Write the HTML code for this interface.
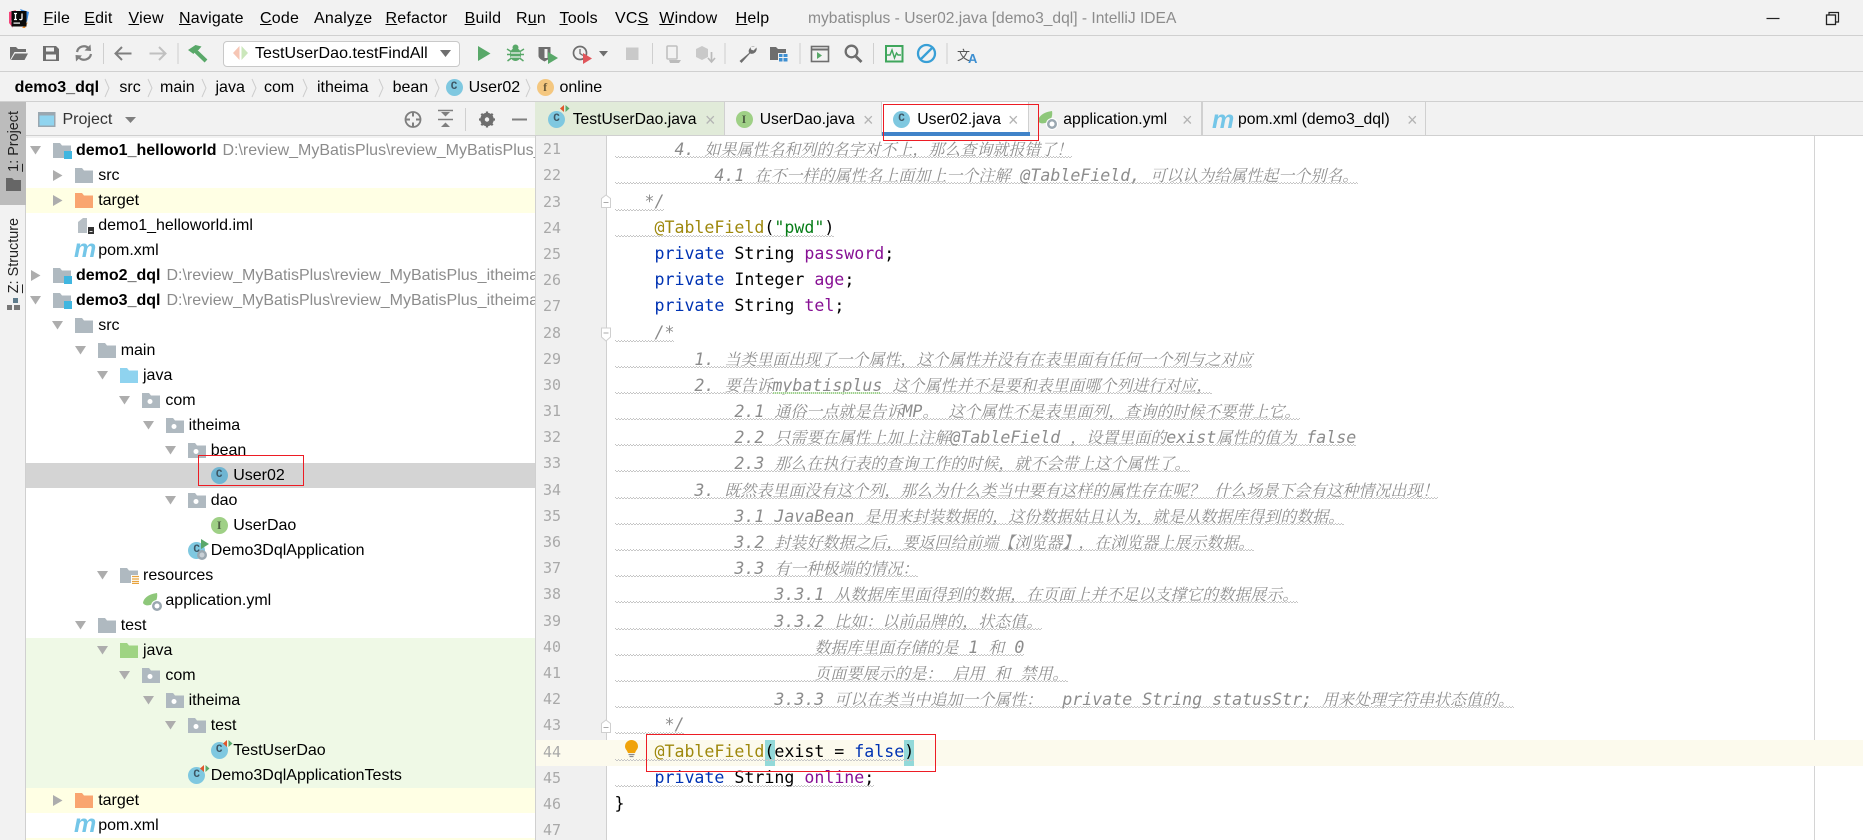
<!DOCTYPE html>
<html><head><meta charset="utf-8"><title>mybatisplus - User02.java</title>
<style>
html,body{margin:0;padding:0;width:1863px;height:840px;overflow:hidden;background:#f2f2f2}
body{position:relative;font:16px "Liberation Sans","Noto Sans CJK SC",sans-serif;color:#000}
.a{position:absolute;white-space:pre}
.hl{position:absolute;left:0;width:1863px;height:1px;background:#d0d0d0}
.m{position:absolute;top:9px;line-height:20px;letter-spacing:.2px}
.b{position:absolute;top:77px;line-height:22px}
.tab{position:absolute;top:102px;height:33px;border-right:1px solid #d0d0d0;box-sizing:border-box}
.tt{position:absolute;top:109px;line-height:22px;font-size:15.7px}
.x{position:absolute;top:110px;color:#b4b4b4;font-size:18px;line-height:20px}
.c{position:absolute;width:17px;height:17px;border-radius:50%;background:#7fc8e0;color:#3d5664;font:bold 11px/17px "Liberation Mono",monospace;text-align:center}
.c.i{background:#9fd086;color:#4d5f42;font-family:"Liberation Serif",serif;font-size:12px}
.c.f{background:#f4c77f;color:#6d5b38;font-family:"Liberation Serif",serif;font-size:12px}
#tree{position:absolute;left:0;top:137.5px;width:535px;height:703px;overflow:hidden;background:#fff}
.r{position:relative;height:25px;line-height:25px;white-space:pre}
.r.y{background:#ffffe4}.r.g{background:#eff9e6}.r.s{background:#d4d4d4}
.d0{--x:76px}.d1{--x:98.2px}.d2{--x:120.7px}.d3{--x:143px}.d4{--x:165.4px}.d5{--x:188.6px}.d6{--x:210.7px}.d7{--x:233.2px}
.t{position:absolute;left:var(--x);top:0}
.t b{margin-right:6px}.t em{font-style:normal;color:#8c8c8c}
.ar{position:absolute;left:calc(var(--x) - 46px);top:7px;width:11px;height:11px}
.ic{position:absolute;left:calc(var(--x) - 23px);top:4px;width:19px;height:17px}
.r .c{left:calc(var(--x) - 22.5px);top:4px}
.ov{position:absolute;left:calc(var(--x) - 22.5px);top:1px;width:24px;height:24px}
#gut{position:absolute;left:535px;top:136px;width:70px;height:704px;background:#f0f0f0;border-left:1px solid #d0d0d0;border-right:1px solid #d0d0d0;box-sizing:content-box}
#nums{position:absolute;left:535px;top:136.2px;width:26px;height:704px;overflow:hidden;text-align:right;color:#a9a9a9;font:15px/26.2px "DejaVu Sans Mono",monospace}
#nums div{height:26.2px}
#code{position:absolute;left:614.5px;top:136.2px;width:1240px;height:703px;overflow:hidden;font:italic 16.6px/26.2px "DejaVu Sans Mono","Noto Serif CJK SC",monospace;color:#8c8c8c;text-spacing-trim:space-all}
#code>div{height:26.2px}
.w,.p{white-space:pre}
.w{display:block;width:fit-content;height:22px;background-image:repeating-linear-gradient(90deg,#c2c2c2 0 1px,transparent 1px 3px),repeating-linear-gradient(90deg,transparent 0 1px,#c8c8c8 1px 3px);background-size:100% 1px;background-position:0 calc(100% - 1px),0 100%;background-repeat:no-repeat}
.p{display:block;width:fit-content;height:22px}
#code i{font:italic 16px/26.2px "Noto Serif CJK SC",serif;color:#8f8f8f}
#code .n{font-style:normal;color:#000}
.kw{color:#0033b3}.fd{color:#871094}.an{color:#9e880d}.st{color:#067d17}
.red{position:absolute;border:1px solid #ed1c24;box-sizing:border-box}
.vt{position:absolute;writing-mode:vertical-rl;transform:rotate(180deg);font-size:14.4px;line-height:16px;left:6px;white-space:pre;color:#222}
</style></head><body>

<svg width="0" height="0" style="position:absolute">
<symbol id="dn" viewBox="0 0 11 11"><polygon points="0,1 11,1 5.5,9.5" fill="#adadad"/></symbol>
<symbol id="rt" viewBox="0 0 11 11"><polygon points="1,0 10.5,5.5 1,11" fill="#adadad"/></symbol>
<symbol id="fo" viewBox="0 0 19 17"><path d="M0 1h7l2 2.500h9V16H0z" fill="#afb9c0"/></symbol>
<symbol id="pk" viewBox="0 0 19 17"><path d="M0 1h7l2 2.500h9V16H0z" fill="#afb9c0"/><circle cx="8" cy="9.500" r="2.500" fill="#fff"/></symbol>
<symbol id="mo" viewBox="0 0 19 17"><path d="M0 1h7l2 2.500h9V16H0z" fill="#afb9c0"/><rect x="11" y="9" width="8" height="8" fill="#40b6e0" /></symbol>
<symbol id="bl" viewBox="0 0 19 17"><path d="M0 1h7l2 2.500h9V16H0z" fill="#8fd3ef"/></symbol>
<symbol id="gr" viewBox="0 0 19 17"><path d="M0 1h7l2 2.500h9V16H0z" fill="#9fd483"/></symbol>
<symbol id="or" viewBox="0 0 19 17"><path d="M0 1h7l2 2.500h9V16H0z" fill="#f9a570"/></symbol>
<symbol id="re" viewBox="0 0 19 17"><path d="M0 1h7l2 2.500h9V16H0z" fill="#afb9c0"/><rect x="11" y="8" width="8" height="9" fill="#fff"/><path d="M12 9.500h7M12 12h7M12 14.500h7M12 16.500h7" stroke="#e8a33d" stroke-width="1.300"/></symbol>
<symbol id="im" viewBox="0 0 19 17"><path d="M3 5l5-4h4v15H3z" fill="#b7bfc5"/><rect x="12" y="8" width="7" height="9" fill="#fff"/><rect x="13" y="10" width="6" height="7" fill="#333"/><rect x="14.500" y="14" width="3" height="1" fill="#ddd"/></symbol>
<symbol id="sp" viewBox="0 0 24 24"><path d="M0 14C1 8 7 5 14 4c1 5-1 11-7 12-3 1-6 0-7-2z" fill="#8ec77a"/><circle cx="14" cy="17" r="6" fill="#fff"/><circle cx="14" cy="17" r="5" fill="#9aa7b0"/><circle cx="14" cy="17" r="2.500" fill="#fff"/></symbol>
<symbol id="tst" viewBox="0 0 24 24"><polygon points="16,1 16,8 12,4.500" fill="#e0562b"/><polygon points="17.500,1 17.500,8 21.500,4.500" fill="#59a869"/></symbol>
<symbol id="app" viewBox="0 0 24 24"><polygon points="13,0 21,5 13,10" fill="#59a869"/><circle cx="14" cy="16" r="5" fill="#9aa7b0"/><circle cx="14" cy="16" r="2.500" fill="#c8d0d6"/></symbol>
</svg>

<!-- top bars -->
<div class="hl" style="top:35px"></div>
<div class="hl" style="top:71px"></div>
<div class="hl" style="top:101px"></div>

<svg class="a" style="left:8px;top:9px" width="22" height="20" viewBox="0 0 22 20"><path d="M1 3L8 1 3 12 5 19 1 14z" fill="#f5457a"/><path d="M12 0l9 3-2 10z" fill="#3b8ee8"/><path d="M3 19h14l3-6-6 6z" fill="#f08a24"/><rect x="3.500" y="2" width="15" height="15.500" fill="#0a0a0a"/><rect x="5.500" y="13.500" width="6.500" height="1.200" fill="#fff"/><path d="M6 4.500h3M7.500 4.500v6M6 10.500h3M14 4.500v5c0 1.500-2 1.500-2.500.500" stroke="#fff" stroke-width="1.300" fill="none"/></svg>

<span class="m" style="left:43.500px"><u>F</u>ile</span>
<span class="m" style="left:84.200px"><u>E</u>dit</span>
<span class="m" style="left:128.500px"><u>V</u>iew</span>
<span class="m" style="left:179px"><u>N</u>avigate</span>
<span class="m" style="left:260px"><u>C</u>ode</span>
<span class="m" style="left:314px">Analy<u>z</u>e</span>
<span class="m" style="left:385.500px"><u>R</u>efactor</span>
<span class="m" style="left:464.600px"><u>B</u>uild</span>
<span class="m" style="left:516px">R<u>u</u>n</span>
<span class="m" style="left:559.500px"><u>T</u>ools</span>
<span class="m" style="left:615px">VC<u>S</u></span>
<span class="m" style="left:659.300px"><u>W</u>indow</span>
<span class="m" style="left:735.600px"><u>H</u>elp</span>
<span class="m" style="left:808px;color:#8c8c8c;font-size:15.600px;letter-spacing:0">mybatisplus - User02.java [demo3_dql] - IntelliJ IDEA</span>

<svg class="a" style="left:1760px;top:8px" width="90" height="20" viewBox="0 0 90 20"><path d="M6.500 10.500h13" stroke="#222" stroke-width="1.200"/><path d="M69 7V4.500h9.500V14H76" fill="none" stroke="#222" stroke-width="1.200"/><rect x="66.500" y="7" width="9" height="9.500" fill="#f2f2f2" stroke="#222" stroke-width="1.300"/></svg>

<!-- toolbar -->
<div class="a" style="left:222.500px;top:40.500px;width:237px;height:26px;background:#fff;border:1px solid #c9c9c9;border-radius:4px;box-sizing:border-box"></div>
<span class="a" style="left:255px;top:43px;line-height:21px;letter-spacing:.05px">TestUserDao.testFindAll</span>
<svg class="a" style="left:0;top:36px" width="1000" height="36" viewBox="0 36 1000 36">
<path d="M10 60V47h6l2 2h8v3H14.500L10 60z" fill="#6e6e6e"/><path d="M15 53.500h13L24.500 60H11z" fill="#6e6e6e"/>
<path d="M43 46h13l3 3v12H43z" fill="#6e6e6e"/><rect x="46" y="47.500" width="8" height="4" fill="#f2f2f2"/><rect x="46" y="54.500" width="10" height="5" fill="#f2f2f2"/>
<path d="M77 52a7 7 0 0 1 12-3.500M91 54a7 7 0 0 1-12 3.500" fill="none" stroke="#7f7f7f" stroke-width="2.200"/><polygon points="90.500,44.500 91,51 84.500,50.500" fill="#7f7f7f"/><polygon points="76,61.500 75.500,55 82,55.500" fill="#7f7f7f"/>
<path d="M103.500 43v21M178 43v21M652.500 43v21M725 43v21M800 43v21M873.500 43v21M947 43v21" stroke="#cfcfcf" stroke-width="1"/>
<path d="M131.500 53.500H116M122 47l-6.500 6.500 6.500 6.500" fill="none" stroke="#7f7f7f" stroke-width="2"/>
<path d="M149.500 53.500H165M159 47l6.500 6.500L159 60" fill="none" stroke="#c0c0c0" stroke-width="2"/>
<path d="M188 50l7.500-5 6 1.500-3 3.500-3 1-2 3z" fill="#59a869"/><path d="M194.500 50l11.500 11" stroke="#59a869" stroke-width="4"/>
<polygon points="239.500,46 233,53 239.500,60" fill="#f6c6b5"/><polygon points="241.500,46 248,53 241.500,60" fill="#cbe7bb"/>
<polygon points="440,50 451,50 445.500,57" fill="#6e6e6e"/>
<polygon points="478,46 490.500,53.500 478,61" fill="#59a869"/>
<ellipse cx="515.500" cy="54.500" rx="5.500" ry="6.500" fill="#59a869"/><circle cx="515.500" cy="47.500" r="3" fill="#59a869"/><path d="M507 49l4 2.500M524 49l-4 2.500M507 54.500h4M524 54.500h-4M507.500 61l4-3M523.500 61l-4-3M511 53h9M511 57h9" stroke="#59a869" stroke-width="1.500"/><path d="M511 53h9M511 57h9" stroke="#f2f2f2" stroke-width="1.200"/>
<path d="M538.500 47h12v9c0 2-3 4-6 5.500-3-1.500-6-3.500-6-5.500z" fill="#6e6e6e"/><rect x="544.500" y="49" width="3" height="9" fill="#f2f2f2"/><polygon points="548,52 558,58 548,64" fill="#59a869"/>
<circle cx="580" cy="53" r="6.500" fill="none" stroke="#6e6e6e" stroke-width="1.700"/><path d="M580 49v4.500l3 2" stroke="#6e6e6e" fill="none" stroke-width="1.300"/><polygon points="583,53 592,58.500 583,64" fill="#e0565b"/>
<polygon points="599,51 608,51 603.500,56.500" fill="#6e6e6e"/>
<rect x="626" y="47.500" width="12.500" height="12.500" fill="#c9c9c9"/>
<rect x="667" y="46" width="10" height="13" rx="1" fill="none" stroke="#c0c0c0" stroke-width="1.600"/><path d="M669 60h12l-2 3h-9z" fill="#bbb"/>
<path d="M696 49l6-3 6 3v8l-6 3-6-3z" fill="#c9c9c9"/><path d="M711.500 52v9M708 58l3.500 4 3.500-4" stroke="#bbb" stroke-width="1.700" fill="none"/>
<path d="M755 46.500a5 5 0 0 0-6 6.500l-9.500 8 2 2 8.500-9.500a5 5 0 0 0 6.500-6l-3 3-2.500-1-.5-2.500z" fill="#6e6e6e"/>
<path d="M770 47h6l2 2h8v11h-16z" fill="#6e6e6e"/><rect x="778" y="53" width="10" height="9" fill="#f2f2f2"/><path d="M779 54h3.500v3H779zM783.500 54h4v3h-4zM779 58h3.500v3.500H779zM783.500 58h4v3.500h-4z" fill="#3d8fd1"/>
<rect x="811.500" y="46.500" width="17" height="15" fill="none" stroke="#6e6e6e" stroke-width="1.600"/><path d="M811.500 49.500h17" stroke="#6e6e6e" stroke-width="2"/><polygon points="817,52 817,59 822,55.500" fill="#59a869"/>
<circle cx="851.500" cy="51.500" r="5.800" fill="none" stroke="#6e6e6e" stroke-width="2.300"/><path d="M855.500 56l6 6" stroke="#6e6e6e" stroke-width="2.800"/>
<rect x="886" y="46" width="16.500" height="15.500" fill="none" stroke="#3fa65c" stroke-width="2"/><path d="M887 55h3l2-5 2.500 8 2-5 1.500 2h3" fill="none" stroke="#3fa65c" stroke-width="1.400"/>
<circle cx="926.500" cy="53.500" r="8.500" fill="none" stroke="#389fd6" stroke-width="2.300"/><path d="M932.500 47.500l-12 12" stroke="#389fd6" stroke-width="2.300"/>
<text x="957" y="60" font-family="Noto Sans CJK SC,sans-serif" font-size="13" fill="#555">文</text><text x="968" y="63" font-family="Liberation Sans,sans-serif" font-size="13" font-weight="bold" fill="#3d8fd1">A</text>
</svg>

<!-- breadcrumb -->
<b class="b" style="left:14.600px">demo3_dql</b>
<span class="b" style="left:119.400px">src</span>
<span class="b" style="left:160px">main</span>
<span class="b" style="left:215.500px">java</span>
<span class="b" style="left:264px">com</span>
<span class="b" style="left:317px">itheima</span>
<span class="b" style="left:392.600px">bean</span>
<div class="c" style="left:445.600px;top:79px">C</div>
<span class="b" style="left:468.600px">User02</span>
<div class="c f" style="left:536.600px;top:79px">f</div>
<span class="b" style="left:559.500px">online</span>
<svg class="a" style="left:0;top:76px" width="540" height="24" viewBox="0 0 540 24" fill="none" stroke="#cdcdcd"><path d="M105 3l4 9-4 9M148 3l4 9-4 9M202 3l4 9-4 9M252 3l4 9-4 9M303 3l4 9-4 9M379 3l4 9-4 9M435 3l4 9-4 9M526 3l4 9-4 9"/></svg>

<!-- tool window header -->
<svg class="a" style="left:26px;top:102px" width="509" height="33" viewBox="26 102 509 33">
<rect x="38" y="112" width="17.500" height="15" fill="#9aa7b0"/><rect x="39.500" y="115.500" width="14.500" height="10" fill="#90d4ef"/>
<polygon points="125,117 136,117 130.500,123" fill="#7f7f7f"/>
<circle cx="413" cy="119.500" r="7.500" fill="none" stroke="#7f7f7f" stroke-width="1.800"/><path d="M413 112v4.500M413 122.500v4.500M405.500 119.500h4.500M416 119.500h4.500" stroke="#7f7f7f" stroke-width="2"/>
<path d="M438 119.500h15" stroke="#7f7f7f" stroke-width="1.500"/><polygon points="441,112 450,112 445.500,116.500" fill="#7f7f7f"/><polygon points="441,127 450,127 445.500,122.500" fill="#7f7f7f"/><path d="M438 110.500h15" stroke="#7f7f7f" stroke-width="1.500"/>
<path d="M465.500 108v23" stroke="#d0d0d0"/>
<circle cx="487" cy="119.500" r="5" fill="none" stroke="#6e6e6e" stroke-width="3.500"/><path d="M487 111.500v16M479 119.500h16M481.300 113.800l11.400 11.400M492.700 113.800l-11.400 11.400" stroke="#6e6e6e" stroke-width="2.200"/><circle cx="487" cy="119.500" r="2.200" fill="#f2f2f2"/>
<path d="M512 119.500h15" stroke="#7f7f7f" stroke-width="2"/>
</svg>
<span class="a" style="left:62.500px;top:109px;line-height:22px;color:#333">Project</span>
<div class="hl" style="top:135px"></div>

<!-- tree -->
<div id="tree">
<div class="r d0"><svg class="ar"><use href="#dn"/></svg><svg class="ic"><use href="#mo"/></svg><span class="t"><b>demo1_helloworld</b><em>D:\review_MyBatisPlus\review_MyBatisPlus_itheima</em></span></div>
<div class="r d1"><svg class="ar"><use href="#rt"/></svg><svg class="ic"><use href="#fo"/></svg><span class="t">src</span></div>
<div class="r y d1"><svg class="ar"><use href="#rt"/></svg><svg class="ic"><use href="#or"/></svg><span class="t">target</span></div>
<div class="r d1"><svg class="ic"><use href="#im"/></svg><span class="t">demo1_helloworld.iml</span></div>
<div class="r d1"><span class="a" style="left:74px;top:-1px;font:italic bold 25px/25px 'Liberation Sans',sans-serif;color:#74c6e8">m</span><span class="t">pom.xml</span></div>
<div class="r d0"><svg class="ar"><use href="#rt"/></svg><svg class="ic"><use href="#mo"/></svg><span class="t"><b>demo2_dql</b><em>D:\review_MyBatisPlus\review_MyBatisPlus_itheima</em></span></div>
<div class="r d0"><svg class="ar"><use href="#dn"/></svg><svg class="ic"><use href="#mo"/></svg><span class="t"><b>demo3_dql</b><em>D:\review_MyBatisPlus\review_MyBatisPlus_itheima</em></span></div>
<div class="r d1"><svg class="ar"><use href="#dn"/></svg><svg class="ic"><use href="#fo"/></svg><span class="t">src</span></div>
<div class="r d2"><svg class="ar"><use href="#dn"/></svg><svg class="ic"><use href="#fo"/></svg><span class="t">main</span></div>
<div class="r d3"><svg class="ar"><use href="#dn"/></svg><svg class="ic"><use href="#bl"/></svg><span class="t">java</span></div>
<div class="r d4"><svg class="ar"><use href="#dn"/></svg><svg class="ic"><use href="#pk"/></svg><span class="t">com</span></div>
<div class="r d5"><svg class="ar"><use href="#dn"/></svg><svg class="ic"><use href="#pk"/></svg><span class="t">itheima</span></div>
<div class="r d6"><svg class="ar"><use href="#dn"/></svg><svg class="ic"><use href="#pk"/></svg><span class="t">bean</span></div>
<div class="r s d7"><div class="c" style="background:#6fb5d2">C</div><span class="t">User02</span></div>
<div class="r d6"><svg class="ar"><use href="#dn"/></svg><svg class="ic"><use href="#pk"/></svg><span class="t">dao</span></div>
<div class="r d7"><div class="c i">I</div><span class="t">UserDao</span></div>
<div class="r d6"><div class="c">C</div><svg class="ov" viewBox="0 0 24 24"><use href="#app"/></svg><span class="t">Demo3DqlApplication</span></div>
<div class="r d3"><svg class="ar"><use href="#dn"/></svg><svg class="ic"><use href="#re"/></svg><span class="t">resources</span></div>
<div class="r d4"><svg class="ov" viewBox="0 0 24 24"><use href="#sp"/></svg><span class="t">application.yml</span></div>
<div class="r d2"><svg class="ar"><use href="#dn"/></svg><svg class="ic"><use href="#fo"/></svg><span class="t">test</span></div>
<div class="r g d3"><svg class="ar"><use href="#dn"/></svg><svg class="ic"><use href="#gr"/></svg><span class="t">java</span></div>
<div class="r g d4"><svg class="ar"><use href="#dn"/></svg><svg class="ic"><use href="#pk"/></svg><span class="t">com</span></div>
<div class="r g d5"><svg class="ar"><use href="#dn"/></svg><svg class="ic"><use href="#pk"/></svg><span class="t">itheima</span></div>
<div class="r g d6"><svg class="ar"><use href="#dn"/></svg><svg class="ic"><use href="#pk"/></svg><span class="t">test</span></div>
<div class="r g d7"><div class="c">C</div><svg class="ov" viewBox="0 0 24 24"><use href="#tst"/></svg><span class="t">TestUserDao</span></div>
<div class="r g d6"><div class="c">C</div><svg class="ov" viewBox="0 0 24 24"><use href="#tst"/></svg><span class="t">Demo3DqlApplicationTests</span></div>
<div class="r y d1"><svg class="ar"><use href="#rt"/></svg><svg class="ic"><use href="#or"/></svg><span class="t">target</span></div>
<div class="r d1"><span class="a" style="left:74px;top:-1px;font:italic bold 25px/25px 'Liberation Sans',sans-serif;color:#74c6e8">m</span><span class="t">pom.xml</span></div>
<div class="r y d1"></div>
</div>

<!-- left strip -->
<div class="a" style="left:0;top:102px;width:26px;height:738px;background:#f2f2f2;border-right:1px solid #d0d0d0;box-sizing:border-box"></div>
<div class="a" style="left:0;top:102px;width:26px;height:103px;background:#bcbcbc"></div>
<span class="vt" style="top:111px"><u>1</u>: Project</span>
<svg class="a" style="left:6px;top:178px" width="16" height="13" viewBox="0 0 16 13"><path d="M0 0h6l2 2h7v11H0z" fill="#666"/></svg>
<span class="vt" style="top:218px"><u>Z</u>: Structure</span>
<svg class="a" style="left:7px;top:298px" width="14" height="13" viewBox="0 0 14 13"><rect x="6" y="0" width="5" height="5" fill="#5f7c8c"/><rect x="0" y="7" width="5" height="5" fill="#777"/><rect x="7" y="7" width="6" height="5" fill="#777"/></svg>

<!-- tabs -->
<div class="tab" style="left:535px;width:190px;background:#e1ebd9"></div>
<div class="tab" style="left:725px;width:157px"></div>
<div class="tab" style="left:882px;width:147px;background:#fff"></div>
<div class="tab" style="left:1029px;width:173px"></div>
<div class="tab" style="left:1202px;width:224px;border-left:1px solid #d0d0d0"></div>
<div class="a" style="left:881.500px;top:131.500px;width:148px;height:4px;background:#4083c9"></div>

<div class="c" style="left:548px;top:111px">C</div>
<svg class="a" style="left:548px;top:104px" width="24" height="24" viewBox="0 0 24 24"><use href="#tst"/></svg>
<span class="tt" style="left:572.700px">TestUserDao.java</span><span class="x" style="left:705px">×</span>
<div class="c i" style="left:735.500px;top:111px">I</div>
<span class="tt" style="left:759.700px">UserDao.java</span><span class="x" style="left:863px">×</span>
<div class="c" style="left:893px;top:111px">C</div>
<span class="tt" style="left:917.300px">User02.java</span><span class="x" style="left:1008px">×</span>
<svg class="a" style="left:1038px;top:107px" width="24" height="24" viewBox="0 0 24 24"><use href="#sp"/></svg>
<span class="tt" style="left:1063.300px">application.yml</span><span class="x" style="left:1182px">×</span>
<span class="a" style="left:1212px;top:108px;font:italic bold 25px/25px 'Liberation Sans',sans-serif;color:#74c6e8">m</span>
<span class="tt" style="left:1238px">pom.xml (demo3_dql)</span><span class="x" style="left:1407px">×</span>

<!-- editor -->
<div class="a" style="left:535px;top:136px;width:1328px;height:704px;background:#fff"></div>
<div id="gut"></div>
<div class="a" style="left:1814px;top:136px;width:1px;height:704px;background:#d4d4d4"></div>
<div class="a" style="left:536px;top:740px;width:1327px;height:26px;background:#fcfaed"></div>
<div class="a" style="left:764.500px;top:740px;width:10px;height:26px;background:#93d9d9"></div>
<div class="a" style="left:904px;top:740px;width:10px;height:26px;background:#93d9d9"></div>

<div id="nums"><div>21</div><div>22</div><div>23</div><div>24</div><div>25</div><div>26</div><div>27</div><div>28</div><div>29</div><div>30</div><div>31</div><div>32</div><div>33</div><div>34</div><div>35</div><div>36</div><div>37</div><div>38</div><div>39</div><div>40</div><div>41</div><div>42</div><div>43</div><div>44</div><div>45</div><div>46</div><div>47</div></div>

<svg class="a" style="left:596px;top:190px" width="50" height="580" viewBox="596 190 50 580">
<path d="M601.500 198.500l4.500-3.500 4.500 3.500v9h-9z" fill="#fff" stroke="#cfcfcf"/><path d="M603.500 202.500h5" stroke="#aaa"/>
<path d="M601.500 328h9v9l-4.500 4-4.500-4z" fill="#fff" stroke="#cfcfcf"/><path d="M603.500 333h5" stroke="#aaa"/>
<path d="M601.500 723.500l4.500-3.500 4.500 3.500v9h-9z" fill="#fff" stroke="#cfcfcf"/><path d="M603.500 727.500h5" stroke="#aaa"/>
<path d="M625 746.500a6.500 6.500 0 1 1 13 0c0 2.500-2 3.500-3 6.500h-7c-1-3-3-4-3-6.500z" fill="#f0a30a"/><path d="M628.500 754.500h6M629.500 756.500h4" stroke="#8a8a8a" stroke-width="1.200"/>
</svg>

<div id="code"><div><span class="w">      4. <i>如果属性名和列的名字对不上&#xFF0C;那么查询就报错了&#xFF01;</i></span></div><div><span class="w">          4.1 <i>在不一样的属性名上面加上一个注解</i> @TableField, <i>可以认为给属性起一个别名。</i></span></div><div><span class="w">   */</span></div><div><span class="w n">    <span class="an">@TableField</span>(<span class="st">"pwd"</span>)</span></div><div><span class="p n">    <span class="kw">private</span> String <span class="fd">password</span>;</span></div><div><span class="p n">    <span class="kw">private</span> Integer <span class="fd">age</span>;</span></div><div><span class="p n">    <span class="kw">private</span> String <span class="fd">tel</span>;</span></div><div><span class="w">    /*</span></div><div><span class="w">        1. <i>当类里面出现了一个属性&#xFF0C;这个属性并没有在表里面有任何一个列与之对应</i></span></div><div><span class="w">        2. <i>要告诉</i>mybatisplus <i>这个属性并不是要和表里面哪个列进行对应&#xFF0C;</i></span></div><div><span class="w">            2.1 <i>通俗一点就是告诉</i>MP<i>。</i> <i>这个属性不是表里面列&#xFF0C;查询的时候不要带上它。</i></span></div><div><span class="w">            2.2 <i>只需要在属性上加上注解</i>@TableField <i>&#xFF0C;设置里面的</i>exist<i>属性的值为</i> false</span></div><div><span class="w">            2.3 <i>那么在执行表的查询工作的时候&#xFF0C;就不会带上这个属性了。</i></span></div><div><span class="w">        3. <i>既然表里面没有这个列&#xFF0C;那么为什么类当中要有这样的属性存在呢&#xFF1F;</i> <i>什么场景下会有这种情况出现&#xFF01;</i></span></div><div><span class="w">            3.1 JavaBean <i>是用来封装数据的&#xFF0C;这份数据姑且认为&#xFF0C;就是从数据库得到的数据。</i></span></div><div><span class="w">            3.2 <i>封装好数据之后&#xFF0C;要返回给前端【浏览器】&#xFF0C;在浏览器上展示数据。</i></span></div><div><span class="w">            3.3 <i>有一种极端的情况&#xFF1A;</i></span></div><div><span class="w">                3.3.1 <i>从数据库里面得到的数据&#xFF0C;在页面上并不足以支撑它的数据展示。</i></span></div><div><span class="w">                3.3.2 <i>比如&#xFF1A;以前品牌的&#xFF0C;状态值。</i></span></div><div><span class="w">                    <i>数据库里面存储的是</i> 1 <i>和</i> 0</span></div><div><span class="w">                    <i>页面要展示的是&#xFF1A;</i> <i>启用</i> <i>和</i> <i>禁用。</i></span></div><div><span class="w">                3.3.3 <i>可以在类当中追加一个属性&#xFF1A;</i>  private String statusStr; <i>用来处理字符串状态值的。</i></span></div><div><span class="w">     */</span></div><div><span class="w n">    <span class="an">@TableField</span>(exist = <span class="kw">false</span>)</span></div><div><span class="w n">    <span class="kw">private</span> String <span class="fd">online</span>;</span></div><div><span class="p n">}</span></div></div>
<div class="a" style="left:773px;top:391.500px;width:107px;height:2px;background:repeating-linear-gradient(90deg,#9fd08f 0 1px,#dff0d8 1px 2px)"></div>

<!-- red annotation boxes -->
<div class="red" style="left:883px;top:104px;width:156px;height:37px"></div>
<div class="red" style="left:198px;top:455px;width:106px;height:31px"></div>
<div class="red" style="left:645.500px;top:734px;width:290px;height:38px"></div>
</body></html>
